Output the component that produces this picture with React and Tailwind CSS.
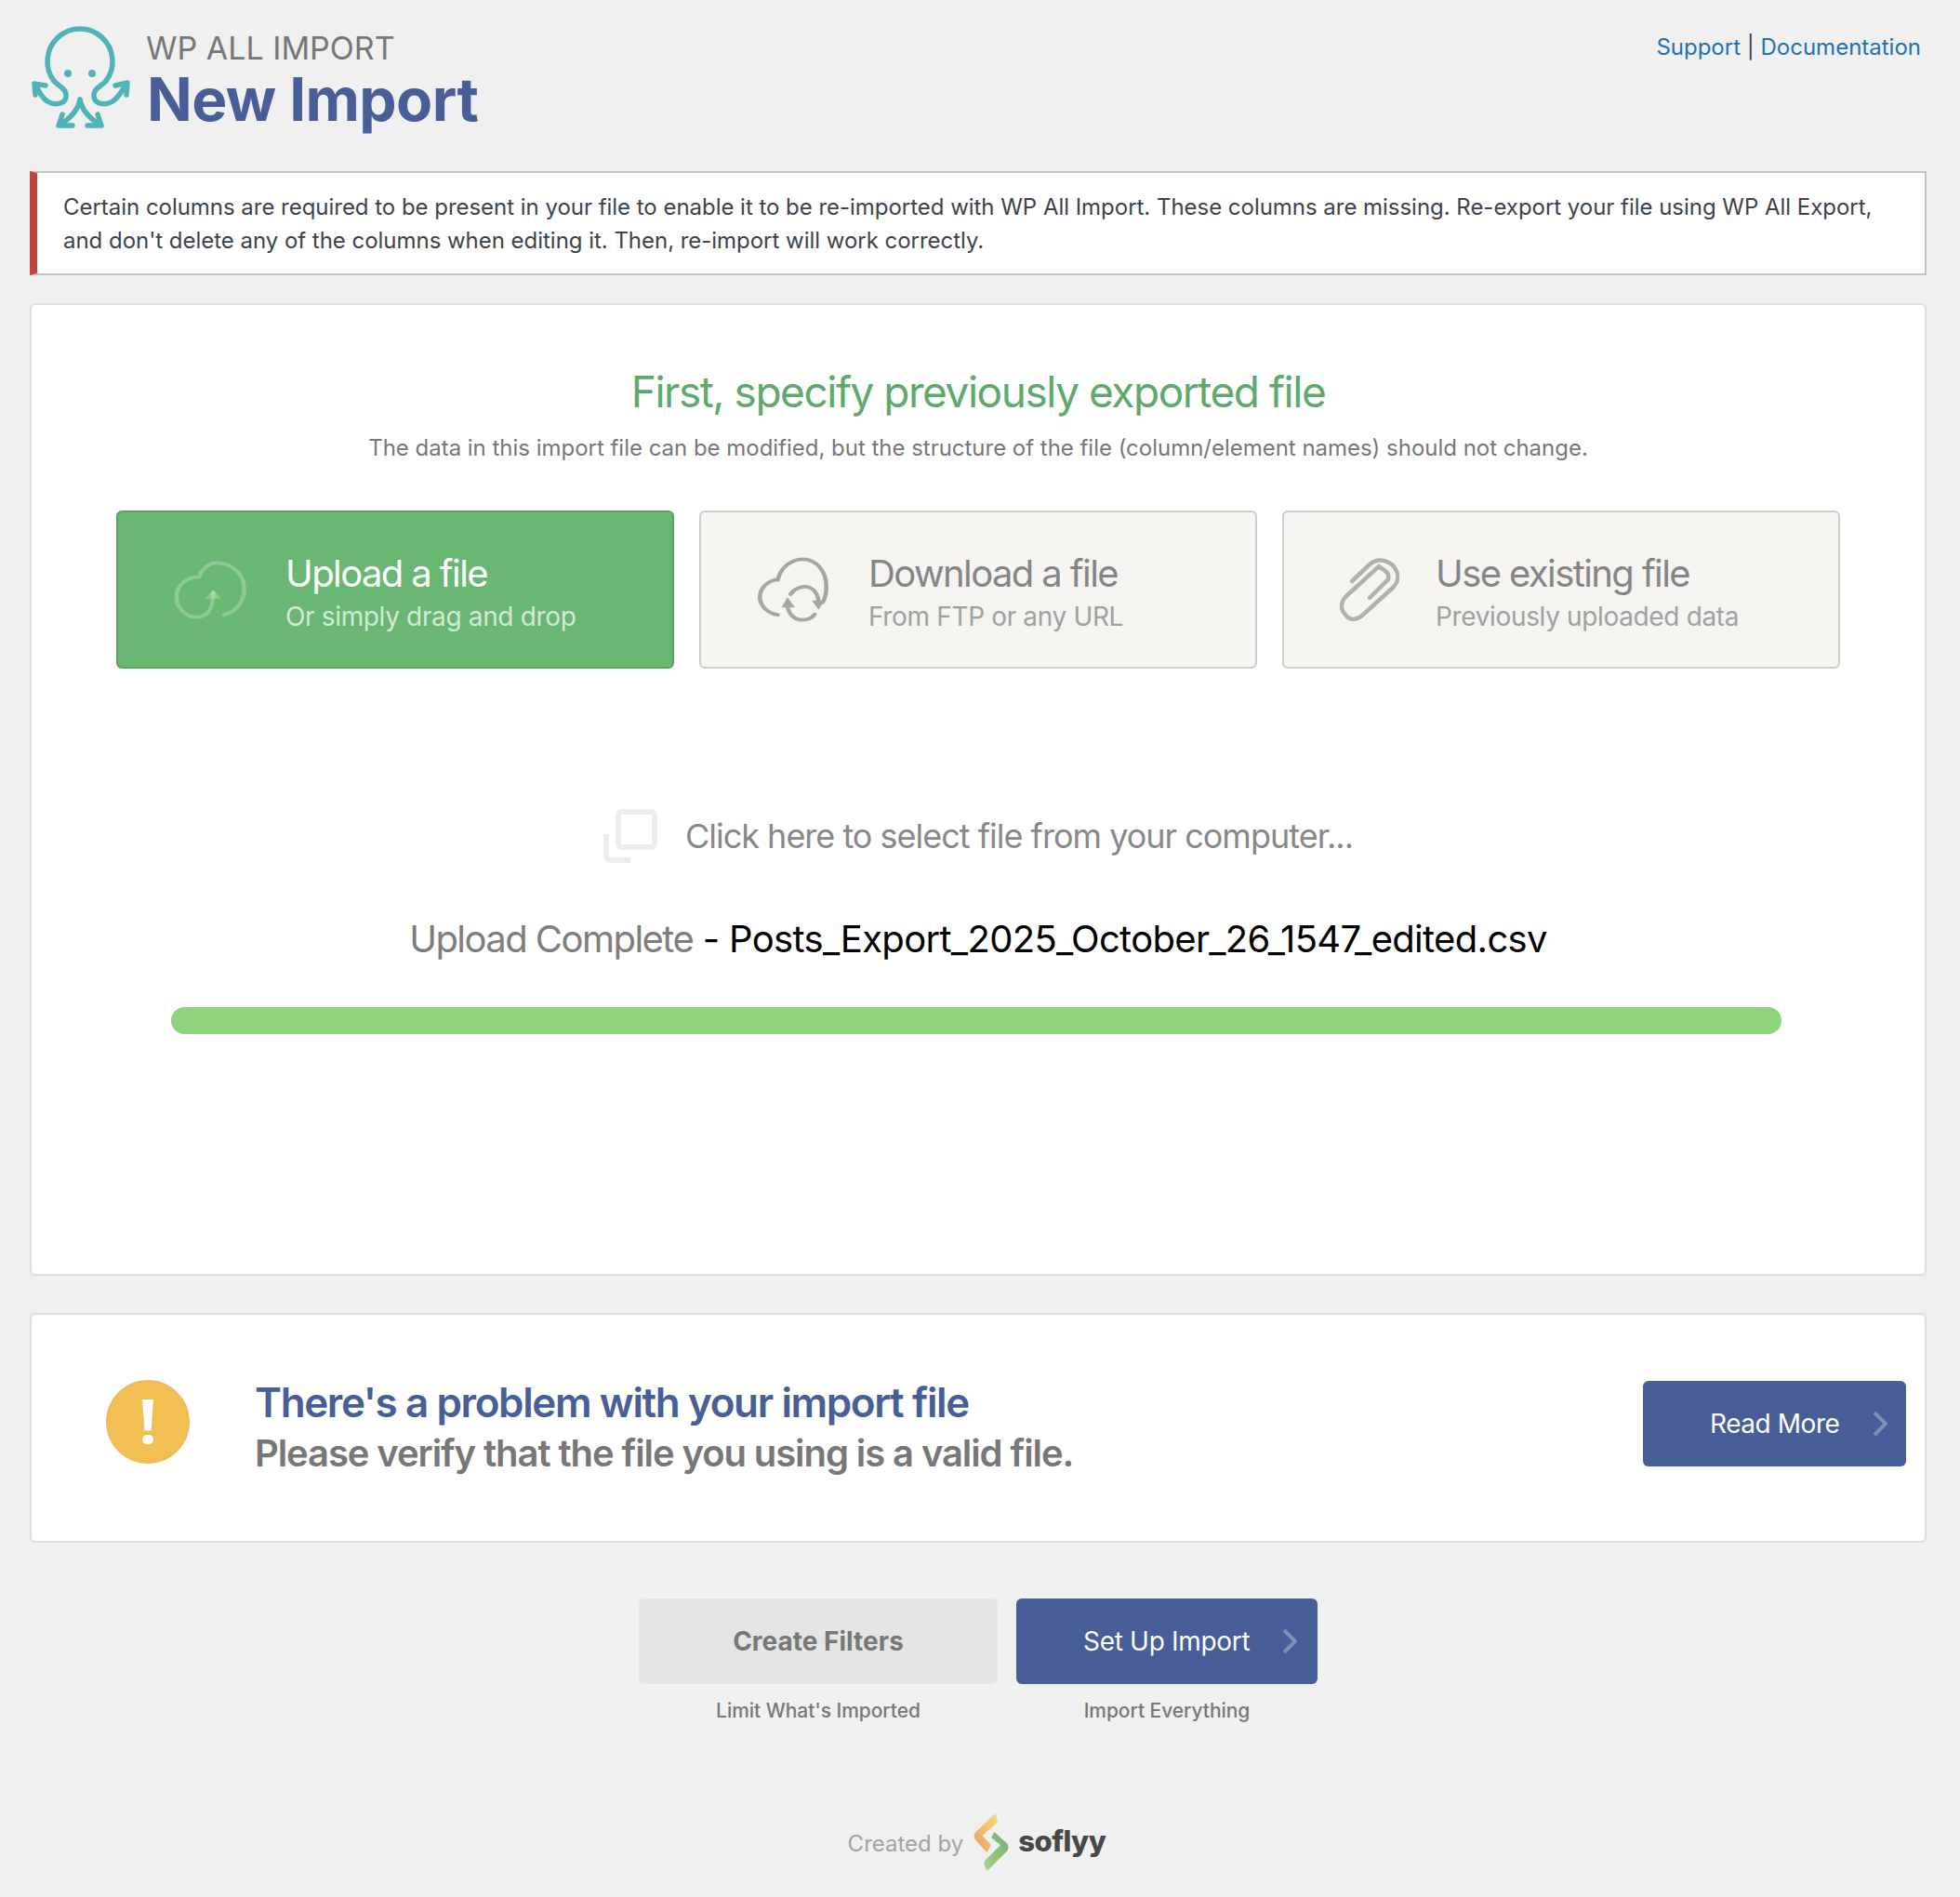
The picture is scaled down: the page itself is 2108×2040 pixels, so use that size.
import React from "react";

const font = { fontFamily: "Inter, 'Liberation Sans', sans-serif" };

const OctopusLogo = () => (
  <svg width="117" height="120" viewBox="33 25 117 120" fill="none" stroke="#4fb3b8" strokeWidth="5.5" strokeLinecap="round" strokeLinejoin="round">
    <path d="M59 87 A35 35 0 1 1 115 87" />
    <path d="M59 87 C64 93 73 95 72 104 C71 112 60 114 52 109 C45 105 42 96 39 91" />
    <path d="M115 87 C110 93 101 95 102 104 C103 112 114 114 122 109 C129 105 133 96 137 90" />
    <path d="M39 102 L38 90 L50 92" />
    <path d="M137 102 L138 89 L125 92" />
    <path d="M87 107 C85 120 75 128 66 134 M87 107 C89 120 99 128 108 134" />
    <path d="M68 123 L64 135 L79 135" />
    <path d="M106 123 L110 135 L95 135" />
    <circle cx="74" cy="79" r="4" fill="#4fb3b8" stroke="none" />
    <circle cx="100" cy="79" r="4" fill="#4fb3b8" stroke="none" />
  </svg>
);

const UploadCloud = () => (
  <svg width="79" height="65" viewBox="190 215 190 195" preserveAspectRatio="none" fill="none" stroke="#ffffff" strokeOpacity="0.25" strokeWidth="11" strokeLinecap="round">
    <path d="M320 393 C355 380 372 345 372 310 C372 260 340 225 300 225 C280 225 262 245 255 270 C220 270 197 300 197 335 C197 370 220 400 248 400 C275 400 292 375 292 320" />
    <path d="M272 340 L292 310 L312 340 Z" fill="#ffffff" fillOpacity="0.25" stroke="none" />
  </svg>
);

const SyncCloud = () => (
  <svg width="78" height="70" viewBox="70 205 190 210" preserveAspectRatio="none" fill="none" stroke="#a6a6a4" strokeWidth="11" strokeLinecap="round">
    <path d="M125 392 C95 385 78 360 78 335 C78 305 98 280 125 278 C132 240 160 212 190 212 C225 212 252 250 252 300 C252 320 248 340 242 352" />
    <path d="M150 355 C150 390 170 408 190 408 C205 408 215 400 222 390" />
    <path d="M158 325 C170 305 190 298 205 302 C225 310 232 330 232 360" />
    <path d="M135 368 L150 335 L170 368 Z" fill="#a6a6a4" stroke="none" />
    <path d="M214 345 L232 375 L247 345 Z" fill="#a6a6a4" stroke="none" />
  </svg>
);

const Paperclip = () => (
  <svg width="64" height="70" viewBox="20 18 64 70" fill="none" stroke="#b0b0ae" strokeWidth="4.5" strokeLinecap="round">
    <path d="M33 44 L52 26 C60 19 70 21 77 27 C84 35 84 44 77 51 L45 80 C37 87 30 86 26 80 C20 74 21 66 27 60 L62 28 C66 32 74 33 72 42 L52 62" />
  </svg>
);

const CopyIcon = () => (
  <svg width="58" height="58" viewBox="0 0 58 58" fill="none" stroke="#ececec" strokeWidth="6">
    <rect x="16" y="3" width="39" height="38" rx="4" />
    <path d="M3 27 V50 C3 53 5 55 8 55 H29" />
  </svg>
);

const Chevron = ({ className }) => (
  <svg className={className} width="16" height="28" viewBox="0 0 16 28" fill="none" stroke="#ffffff" strokeOpacity="0.3" strokeWidth="4">
    <path d="M2 2 L14 14 L2 26" />
  </svg>
);

const SoflyyLogo = () => (
  <svg width="40" height="64" viewBox="500 58 120 194">
    <defs>
      <linearGradient id="orange" x1="0" y1="1" x2="1" y2="0">
        <stop offset="0" stopColor="#eb9d63" />
        <stop offset="1" stopColor="#f4dc7e" />
      </linearGradient>
      <linearGradient id="green" x1="1" y1="0" x2="0" y2="1">
        <stop offset="0" stopColor="#74ab74" />
        <stop offset="1" stopColor="#a9d48b" />
      </linearGradient>
    </defs>
    <path d="M572 62 C580 70 582 82 580 92 L531 134 L560 164 L546 188 L510 150 C502 140 503 128 512 120 Z" fill="url(#orange)" />
    <path d="M570 122 L610 158 C618 166 618 178 610 186 L548 248 C538 238 535 224 540 215 L590 165 L560 140 Z" fill="url(#green)" />
  </svg>
);

const SourceTile = ({ icon, title, subtitle, active, iconClass, textClass }) => (
  <div
    className={
      "flex h-[170px] w-[600px] items-center rounded-[6px] border-2 " +
      (active ? "border-[#5da066] bg-[#69b772]" : "border-[#cfcfc9] bg-[#f5f4f1]")
    }
  >
    <div className={iconClass}>{icon}</div>
    <div className={"mt-[6px] " + textClass}>
      <div className={"text-[40px] leading-[50px] tracking-[-1.6px] " + (active ? "text-white" : "text-[#858585]")}>
        {title}
      </div>
      <div className={"mt-[1px] text-[28px] leading-[40px] tracking-[-0.35px] " + (active ? "text-[#d4ead6]" : "text-[#a0a0a0]")}>
        {subtitle}
      </div>
    </div>
  </div>
);

export default function App() {
  return (
    <div className="min-h-[2040px] bg-[#f0f0f1] pl-[32px] pr-[36px]" style={font}>
      <header className="flex h-[184px] items-start justify-between">
        <div className="flex">
          <div className="pt-[25px]">
            <OctopusLogo />
          </div>
          <div className="ml-[8px] pt-[29px]">
            <div className="text-[34px] leading-[46px] text-[#777777]">WP ALL IMPORT</div>
            <div className="mt-[1px] pl-[1px] text-[64px] font-bold leading-[62px] tracking-[-0.6px] text-[#475e98]">New Import</div>
          </div>
        </div>
        <div className="pr-[6px] pt-[34px] text-[24px] leading-[34px] text-[#2271b1]">
          Support <span className="text-[#3c434a]">|</span> Documentation
        </div>
      </header>

      <div className="h-[112px] border-2 border-l-8 border-[#c3c4c7] border-l-[#c4423f] bg-white pl-[28px] pt-[19px] text-[24px] leading-[36px] tracking-[-0.03px] text-[#3c434a]">
        Certain columns are required to be present in your file to enable it to be re-imported with WP All Import. These columns are missing. Re-export your file using WP All Export,
        <br />
        and don't delete any of the columns when editing it. Then, re-import will work correctly.
      </div>

      <section className="mt-[30px] h-[1046px] rounded-[6px] border-2 border-[#dddddd] bg-white">
        <h1 className="pt-[63px] text-center text-[46px] leading-[60px] tracking-[-1.47px] text-[#5ea96c]">
          First, specify previously exported file
        </h1>
        <p className="mt-[14px] text-center text-[24px] leading-[34px] tracking-[-0.02px] text-[#777777]">
          The data in this import file can be modified, but the structure of the file (column/element names) should not change.
        </p>

        <div className="mt-[50px] flex justify-center gap-[27px]">
          <SourceTile active icon={<UploadCloud />} title="Upload a file" subtitle="Or simply drag and drop" iconClass="ml-[60px]" textClass="ml-[41px]" />
          <SourceTile icon={<SyncCloud />} title="Download a file" subtitle="From FTP or any URL" iconClass="ml-[60px]" textClass="ml-[42px]" />
          <SourceTile icon={<Paperclip />} title="Use existing file" subtitle="Previously uploaded data" iconClass="ml-[60px]" textClass="ml-[39px]" />
        </div>

        <div className="mt-[150px] flex items-center justify-center">
          <CopyIcon />
          <span className="ml-[30px] text-[36px] leading-[60px] tracking-[-1px] text-[#888888]">
            Click here to select file from your computer...
          </span>
        </div>

        <div className="mt-[51px] text-center text-[40px] leading-[60px] tracking-[-0.68px] text-black">
          <span className="tracking-[-1.55px] text-[#7d7d7d]">Upload Complete</span> - Posts_Export_2025_October_26_1547_edited.csv
        </div>

        <div className="ml-[150px] mr-[154px] mt-[43px] h-[29px] rounded-full bg-[#8fd57e]" />
      </section>

      <section className="mt-[40px] flex h-[247px] items-center rounded-[6px] border-2 border-[#dddddd] bg-white pl-[80px] pr-[20px]">
        <div className="mb-[14px] flex h-[90px] w-[90px] shrink-0 flex-col items-center justify-center gap-[4px] rounded-full border-2 border-[#eebd5c] bg-[#f1bf52]">
          <div className="h-[34px] w-[12px] bg-white [clip-path:polygon(0_0,100%_0,80%_100%,20%_100%)]" />
          <div className="h-[10px] w-[12px] rounded-full bg-white" />
        </div>
        <div className="ml-[70px] flex-1 pb-[2px]">
          <div className="text-[44px] font-semibold leading-[56px] tracking-[-1.39px] text-[#475e98]">There's a problem with your import file</div>
          <div className="text-[40px] font-semibold leading-[54px] tracking-[-1.09px] text-[#777777]">Please verify that the file you using is a valid file.</div>
        </div>
        <div className="mb-[10px] flex h-[92px] w-[283px] items-center rounded-[6px] bg-[#475e98] pl-[72px] text-[28px] tracking-[-0.45px] text-white">
          Read More
          <Chevron className="ml-[36px]" />
        </div>
      </section>

      <div className="mt-[60px] flex justify-center gap-[20px]">
        <div className="flex w-[386px] flex-col items-center">
          <div className="flex h-[92px] w-full items-center justify-center rounded-[6px] bg-[#e4e6e5] text-[28px] font-bold text-[#777777]">
            Create Filters
          </div>
          <div className="mt-[15px] text-[21px] font-medium leading-[28px] tracking-[-0.05px] text-[#777777]">Limit What's Imported</div>
        </div>
        <div className="flex w-[324px] flex-col items-center">
          <div className="flex h-[92px] w-full items-center rounded-[6px] bg-[#475e98] pl-[72px] text-[28px] tracking-[-0.3px] text-white">
            Set Up Import
            <Chevron className="ml-[35px]" />
          </div>
          <div className="mt-[15px] text-[21px] font-medium leading-[28px] tracking-[-0.05px] text-[#777777]">Import Everything</div>
        </div>
      </div>

      <footer className="mt-[95px] flex items-center justify-center pr-[3px]">
        <span className="mt-[3px] text-[24px] text-[#a3a3a3]">Created by</span>
        <div className="ml-[10px]">
          <SoflyyLogo />
        </div>
        <span className="mb-[2px] ml-[9px] text-[31px] font-extrabold tracking-[-0.5px] text-[#484848]">soflyy</span>
      </footer>
    </div>
  );
}
